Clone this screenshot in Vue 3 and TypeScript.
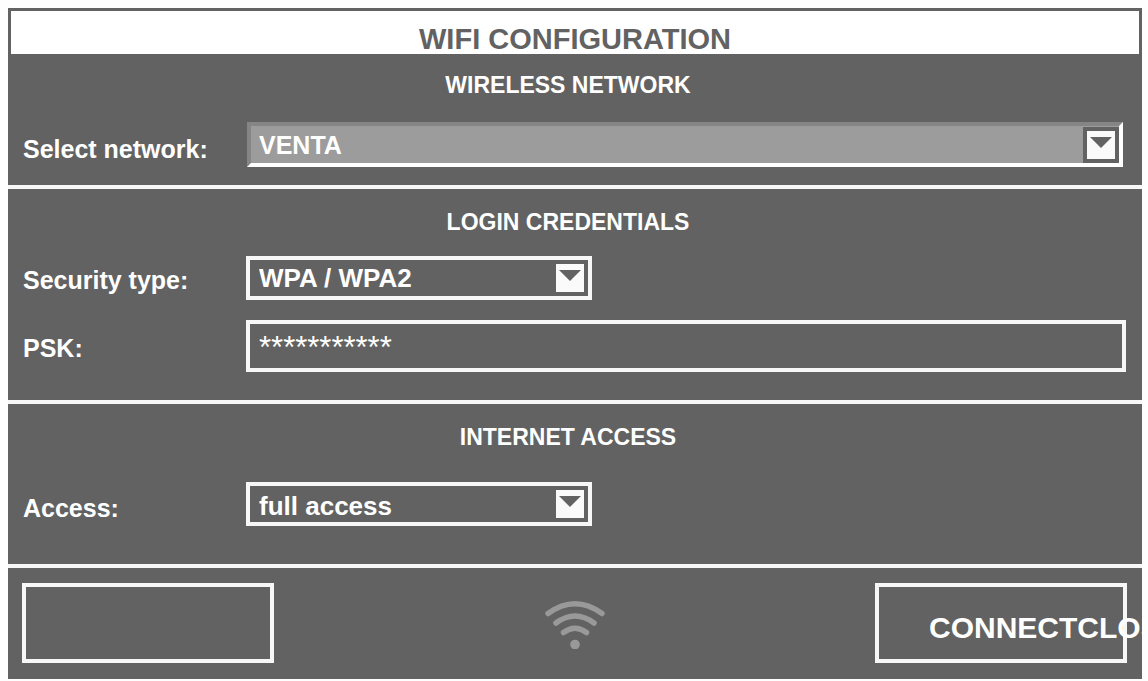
<script setup lang="ts">
import { ref } from 'vue'

const network = ref('VENTA')
const security = ref('WPA / WPA2')
const psk = ref('***********')
const access = ref('full access')
</script>

<template>
  <main class="panel">
    <h1 class="title">WIFI CONFIGURATION</h1>

    <section class="section network">
      <h2>WIRELESS NETWORK</h2>
      <div class="row">
        <label for="network">Select network:</label>
        <div class="picker sunken">
          <select id="network" v-model="network">
            <option>VENTA</option>
          </select>
          <svg class="arrow" viewBox="0 0 28 28" aria-hidden="true"><path d="M3 6H25L14 17Z" /></svg>
        </div>
      </div>
    </section>

    <section class="section login">
      <h2>LOGIN CREDENTIALS</h2>
      <div class="row">
        <label for="security">Security type:</label>
        <div class="picker short">
          <select id="security" v-model="security">
            <option>WPA / WPA2</option>
          </select>
          <svg class="arrow" viewBox="0 0 28 28" aria-hidden="true"><path d="M3 6H25L14 17Z" /></svg>
        </div>
      </div>
      <div class="row">
        <label for="psk">PSK:</label>
        <input id="psk" v-model="psk" type="text" autocomplete="off" spellcheck="false" />
      </div>
    </section>

    <section class="section internet">
      <h2>INTERNET ACCESS</h2>
      <div class="row">
        <label for="access">Access:</label>
        <div class="picker short">
          <select id="access" v-model="access">
            <option>full access</option>
          </select>
          <svg class="arrow" viewBox="0 0 28 28" aria-hidden="true"><path d="M3 6H25L14 17Z" /></svg>
        </div>
      </div>
    </section>

    <footer class="actions">
      <button type="button" aria-label="Empty"></button>
      <svg class="wifi" viewBox="0 0 62 52" aria-hidden="true">
        <g fill="none" stroke="#999" stroke-width="5.5" stroke-linecap="round">
          <path d="M4 16.5Q31 -3 58 16.5" />
          <path d="M12 26Q31 12 50 26" />
          <path d="M19.500 35.500Q31 27 42.500 35.500" />
        </g>
        <circle cx="31" cy="47.500" r="4.800" fill="#999" />
      </svg>
      <button type="button" class="connect">CONNECTCLOSE</button>
    </footer>
  </main>
</template>

<style>
body {
  margin: 0;
  background: #fefefe;
}
</style>

<style scoped>
.panel {
  margin: 8px 6px 0 8px;
  background: #626262;
  color: #fff;
  font-family: "Liberation Sans", Arial, sans-serif;
  font-weight: bold;
  overflow: hidden;
}

.title {
  margin: 3px 3px 0;
  padding-top: 13px;
  background: #fff;
  color: #626262;
  font-size: 29px;
  line-height: 30px;
  text-align: center;
}

.section {
  display: flex;
  flex-direction: column;
  border-bottom: 4px solid #f7f7f7;
}

.network {
  gap: 23px;
  padding: 17px 16px 18px 15px;
}

.login {
  gap: 20px;
  padding: 19px 16px 28px 15px;
}

.internet {
  gap: 31px;
  padding: 19px 16px 38px 15px;
}

h2 {
  margin: 0;
  padding-right: 13px;
  font-size: 23px;
  line-height: 28px;
  text-align: center;
}

.row {
  display: grid;
  grid-template-columns: 223px minmax(0, 1fr);
  align-items: center;
}

label {
  padding-top: 8px;
  font-size: 25px;
  line-height: 28px;
}

.login label {
  padding-top: 3px;
}

.picker {
  display: grid;
  grid-template-columns: minmax(0, 1fr) auto;
  align-items: center;
  box-sizing: border-box;
  height: 44px;
  border: 4px solid #f7f7f7;
}

.picker.short {
  width: 346px;
}

.picker.sunken {
  height: 45px;
  margin: 0 3px 0 1px;
  border-color: #858585 #fff #fff #858585;
  background: #9c9c9c;
}

select {
  grid-area: 1 / 1 / 2 / 3;
  appearance: none;
  width: 100%;
  height: 100%;
  padding: 0 40px 0 9px;
  border: 0;
  border-radius: 0;
  background: transparent;
  color: #fff;
  font: inherit;
  font-size: 26px;
}

.sunken select {
  padding-left: 8px;
  font-size: 25px;
}

.internet select {
  padding-top: 4px;
}

option {
  background: #626262;
}

.arrow {
  grid-area: 1 / 2;
  width: 28px;
  height: 28px;
  margin-right: 4px;
  background: #fafafa;
  pointer-events: none;
}

.arrow path {
  fill: #626262;
}

.sunken .arrow {
  margin-right: 0;
  border: 4px solid #626262;
}

input {
  box-sizing: border-box;
  width: 100%;
  height: 52px;
  padding: 4px 9px 0;
  border: 4px solid #f7f7f7;
  border-radius: 0;
  background: transparent;
  color: #fff;
  font: inherit;
  font-size: 31px;
  font-weight: normal;
}

.actions {
  display: flex;
  align-items: center;
  justify-content: space-between;
  padding: 15px 15px 16px 14px;
}

button {
  box-sizing: border-box;
  width: 252px;
  height: 80px;
  padding: 10px 0 0;
  border: 4px solid #f7f7f7;
  border-radius: 0;
  background: transparent;
  color: #fff;
  font: inherit;
  font-size: 30px;
  text-align: left;
  white-space: nowrap;
}

.connect {
  padding-left: 50px;
}

.wifi {
  width: 62px;
  height: 52px;
}
</style>
